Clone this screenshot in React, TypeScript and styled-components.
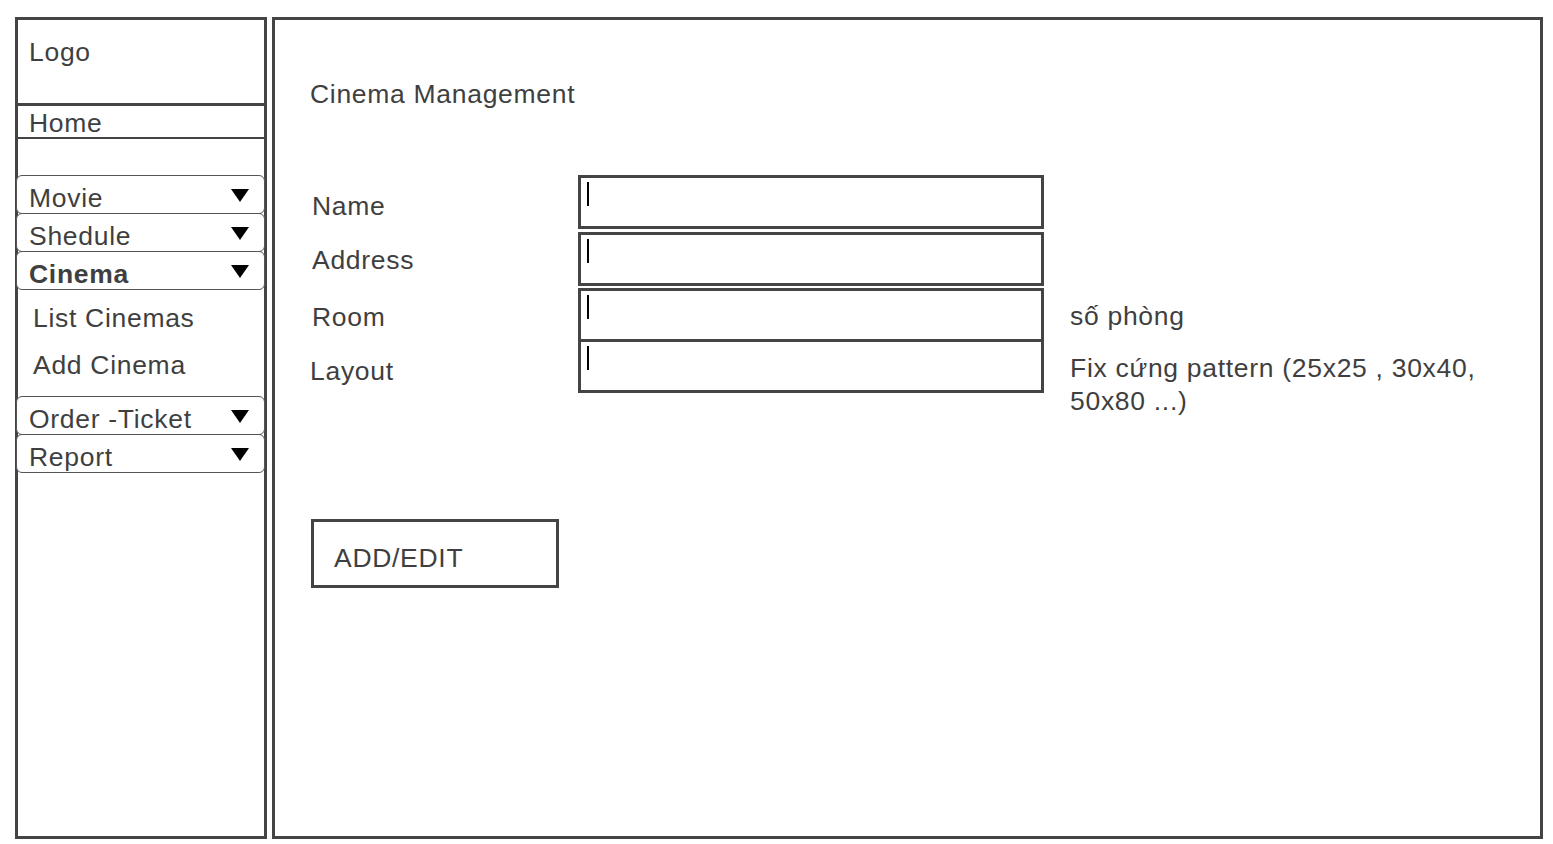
import React from "react";
import styled, { createGlobalStyle } from "styled-components";

const Global = createGlobalStyle`
  html, body { margin: 0; padding: 0; background: #ffffff; }
  body {
    font-family: "Liberation Sans", Arial, Helvetica, sans-serif;
    color: #3f3f3f;
  }
  * { box-sizing: border-box; }
`;

const Page = styled.div`
  display: flex;
  gap: 5px;
  padding: 17px 0 0 15px;
  width: 1553px;
  height: 844px;
  font-size: 26.5px;
  letter-spacing: 0.7px;
  line-height: 30px;
`;

const Sidebar = styled.aside`
  width: 252px;
  height: 822px;
  border: 3px solid #444;
  display: flex;
  flex-direction: column;
`;

const LogoBox = styled.div`
  height: 86px;
  border-bottom: 3px solid #444;
  padding: 17px 0 0 11px;
`;

const HomeRow = styled.div`
  height: 33px;
  border-bottom: 2px solid #444;
  padding: 2px 0 0 11px;
`;

const Menu = styled.nav`
  display: flex;
  flex-direction: column;
  margin: 36px -1px 0 -2px;
`;

const MenuBox = styled.div<{ $bold?: boolean }>`
  height: 39px;
  border: 1px solid #555;
  border-radius: 6px;
  display: flex;
  justify-content: space-between;
  padding: 7px 15px 0 12px;
  font-weight: ${(p) => (p.$bold ? 700 : 400)};
  background: #fff;
  & + & { margin-top: -1px; }
`;

const Caret = styled.svg`
  width: 18px;
  height: 13px;
  margin-top: 6px;
  flex: none;
`;

const SubList = styled.div`
  display: flex;
  flex-direction: column;
  margin: 13px 0 -1px;
`;

const SubItem = styled.div`
  height: 47px;
  padding-left: 17px;
`;

const Main = styled.main`
  width: 1271px;
  height: 822px;
  border: 3px solid #444;
  padding: 59px 0 0 35px;
  display: flex;
  flex-direction: column;
`;

const Title = styled.h1`
  margin: 0;
  font-size: inherit;
  font-weight: 400;
  line-height: 30px;
`;

const Form = styled.div`
  display: flex;
  flex-direction: column;
  margin-top: 66px;
`;

const Row = styled.div<{ $offset: number }>`
  display: flex;
  align-items: flex-start;
  height: 54px;
  margin-top: ${(p) => p.$offset}px;
`;

const Label = styled.label<{ $pad: number; $indent: number }>`
  width: 268px;
  padding: ${(p) => p.$pad}px 0 0 ${(p) => p.$indent}px;
  flex: none;
`;

const Field = styled.div`
  width: 466px;
  height: 54px;
  border: 3px solid #444;
  padding: 4px 0 0 6px;
  flex: none;
  background: #fff;
`;

const TextCaret = styled.span`
  display: block;
  width: 2px;
  height: 24px;
  background: #000;
`;

const Note = styled.div<{ $pad: number }>`
  margin-left: 26px;
  max-width: 440px;
  padding-top: ${(p) => p.$pad}px;
  line-height: 33px;
`;

const Button = styled.button`
  width: 248px;
  height: 69px;
  margin: 126px 0 0 1px;
  border: 3px solid #444;
  background: #fff;
  font: inherit;
  letter-spacing: inherit;
  color: inherit;
  padding: 21px 0 0 20px;
  line-height: 30px;
  align-self: flex-start;
  display: flex;
  align-items: flex-start;
  justify-content: flex-start;
`;

const Triangle = () => (
  <Caret viewBox="0 0 18 13">
    <polygon points="0,0 18,0 9,13" fill="#000" />
  </Caret>
);

const Item = ({ label, bold }: { label: string; bold?: boolean }) => (
  <MenuBox $bold={bold}>
    <span>{label}</span>
    <Triangle />
  </MenuBox>
);

const rows = [
  { label: "Name", offset: 0, lp: 16, li: 2 },
  { label: "Address", offset: 3, lp: 13, li: 2 },
  { label: "Room", offset: 2, lp: 14, li: 2, note: "số phòng", pad: 12 },
  { label: "Layout", offset: -3, lp: 17, li: 0, note: "Fix cứng pattern (25x25 , 30x40, 50x80 ...)", pad: 13 },
];

export default function App() {
  return (
    <>
      <Global />
      <Page>
        <Sidebar>
          <LogoBox>Logo</LogoBox>
          <HomeRow>Home</HomeRow>
          <Menu>
            <Item label="Movie" />
            <Item label="Shedule" />
            <Item label="Cinema" bold />
            <SubList>
              <SubItem>List Cinemas</SubItem>
              <SubItem>Add Cinema</SubItem>
            </SubList>
            <Item label="Order -Ticket" />
            <Item label="Report" />
          </Menu>
        </Sidebar>
        <Main>
          <Title>Cinema Management</Title>
          <Form>
            {rows.map((r) => (
              <Row key={r.label} $offset={r.offset}>
                <Label $pad={r.lp} $indent={r.li}>{r.label}</Label>
                <Field>
                  <TextCaret />
                </Field>
                {r.note && <Note $pad={r.pad ?? 0}>{r.note}</Note>}
              </Row>
            ))}
          </Form>
          <Button>ADD/EDIT</Button>
        </Main>
      </Page>
    </>
  );
}
